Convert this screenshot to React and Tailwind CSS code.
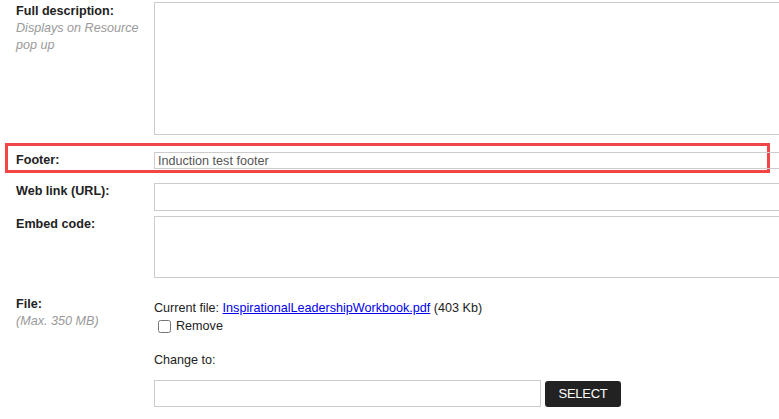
import React from 'react'

const font = { fontFamily: '"Liberation Sans", Arial, sans-serif' }

function Label({ title, hint }) {
  return (
    <div className="w-[138px] shrink-0 leading-[17px]">
      <div className="font-bold text-[#222]">{title}</div>
      {hint && <div className="italic text-[#9a9a9a]">{hint}</div>}
    </div>
  )
}

export default function App() {
  return (
    <div className="w-[779px] h-[419px] overflow-hidden bg-white text-[12.6px] text-[#222]" style={font}>
      <div className="pt-[2px]">
        {/* full description */}
        <div className="flex pl-[16px]">
          <div className="pt-[1px]">
            <Label title="Full description:" hint={<>Displays on Resource<br />pop up</>} />
          </div>
          <textarea className="w-[700px] h-[133px] shrink-0 border border-[#cccccc] resize-none outline-none" />
        </div>

        {/* footer, highlighted */}
        <div className="mt-[8px] ml-[5px] w-[765px] h-[30px] border-[3px] border-[#f24646] flex pl-[8px] pt-[6px]">
          <Label title="Footer:" />
          <input
            className="w-[700px] h-[17px] shrink-0 border border-[#cccccc] px-[3px] text-[12.6px] text-[#555555] outline-none leading-[15px]"
            style={font}
            defaultValue="Induction test footer"
          />
        </div>

        {/* web link */}
        <div className="flex pl-[16px] mt-[10px]">
          <Label title="Web link (URL):" />
          <input className="w-[700px] h-[28px] shrink-0 border border-[#cccccc] outline-none" />
        </div>

        {/* embed code */}
        <div className="flex pl-[16px] mt-[5px]">
          <Label title="Embed code:" />
          <textarea className="w-[700px] h-[62px] shrink-0 border border-[#cccccc] resize-none outline-none" />
        </div>

        {/* file */}
        <div className="flex pl-[16px] mt-[18px]">
          <Label title="File:" hint="(Max. 350 MB)" />
          <div className="pt-[3px] leading-[18px]">
            <div>
              Current file:{' '}
              <a href="#" className="text-[#0000ee] underline">InspirationalLeadershipWorkbook.pdf</a>{' '}
              (403 Kb)
            </div>
            <label className="flex items-center h-[18px]">
              <input type="checkbox" className="w-[13px] h-[13px] ml-[4px] mr-[5px] mt-[1px]" />
              Remove
            </label>
            <div className="mt-[16px]">Change to:</div>
            <div className="flex items-center gap-[4px] mt-[11px]">
              <input className="w-[387px] h-[27px] border border-[#cccccc] outline-none" />
              <button
                className="h-[26px] w-[76px] rounded-[3px] bg-[#222222] text-white text-[13px] tracking-[-0.3px]"
                style={font}
              >
                SELECT
              </button>
            </div>
          </div>
        </div>
      </div>
    </div>
  )
}
